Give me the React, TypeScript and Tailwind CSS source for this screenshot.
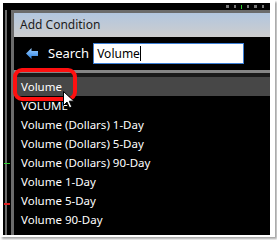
import React from "react";

const items = [
  "VOLUME",
  "Volume (Dollars) 1-Day",
  "Volume (Dollars) 5-Day",
  "Volume (Dollars) 90-Day",
  "Volume 1-Day",
  "Volume 5-Day",
  "Volume 90-Day",
];

const BackArrow = () => (
  <svg width="12" height="11" viewBox="0 0 12 11">
    <defs>
      <linearGradient id="ba" x1="0" y1="0" x2="0" y2="1">
        <stop offset="0" stopColor="#9fd0ff" />
        <stop offset="1" stopColor="#2a7fe0" />
      </linearGradient>
    </defs>
    <path d="M0 5.5 L5.5 0 L5.5 3 L12 3 L12 8 L5.5 8 L5.5 11 Z" fill="url(#ba)" />
  </svg>
);

const Pointer = () => (
  <svg width="13" height="18" viewBox="0 0 13 18">
    <path
      d="M0.5 0.5 L0.5 14.5 L4 11 L6.5 16.8 L8.8 15.8 L6.3 10.2 L11 10.2 Z"
      fill="#fff"
      stroke="#000"
      strokeWidth="1"
      strokeLinejoin="round"
    />
  </svg>
);

const App = () => {
  return (
    <div className="w-[277px] h-[240px] bg-white overflow-hidden font-['Noto_Sans','Liberation_Sans',sans-serif]">
      <div className="w-[275px] h-[237px] bg-white pl-[3px] pt-[3px] shadow-[2px_2px_2px_rgba(0,0,0,0.35)]">
        <div className="relative w-[267px] h-[232px] bg-black flex flex-col overflow-hidden">
          {/* chart behind the dialog, top band */}
          <div className="h-[7px] flex items-center justify-end gap-[5px] pr-[6px]">
            <span className="w-[3px] h-[3px] bg-[#777]" />
            <span className="w-[2px] h-[3px] bg-[#777]" />
            <span className="w-[1px] h-[4px] bg-[#2fd12f]" />
            <span className="w-[2px] h-[3px] bg-[#777]" />
            <span className="w-[3px] h-[3px] bg-[#777]" />
            <span className="w-[2px] h-[3px] bg-[#777]" />
          </div>
          <div className="flex flex-1">
            {/* chart behind the dialog, left strip */}
            <div className="w-[8px] relative">
              <div className="absolute left-[2px] top-0 bottom-0 w-[2px] bg-[#6a6a6a]" />
              <div className="absolute left-[1px] top-[153px] w-[6px] h-[1px] bg-[#2fd12f]" />
              <div className="absolute left-[1px] top-[193px] w-[6px] h-[2px] bg-[#e02020]" />
            </div>

            {/* dialog */}
            <div className="flex-1 flex flex-col border-t-[3px] border-l-[3px] border-[#6b6b6b]">
              <div className="h-[24px] bg-gradient-to-b from-[#b2c6df] to-[#cdcdcd] flex items-center pl-[6px] text-[12px] text-[#1c1c1c]">
                Add Condition
              </div>
              <div className="h-[33px] flex items-center pl-[12px]">
                <BackArrow />
                <span className="ml-[10px] text-white text-[13px]">Search</span>
                <div className="ml-[4px] w-[151px] h-[21px] bg-white border border-[#3c7fd6] flex items-center pl-[3px] text-[12px] text-black">
                  Volume
                  <span className="w-[1px] h-[15px] bg-black" />
                </div>
              </div>
              <div className="h-[3px] bg-[#858585]" />
              <div className="h-[4px] bg-[#1a1a1a]" />
              <div className="h-[19px] bg-[#474747] flex items-center pl-[7px] text-white text-[11.5px]">
                Volume
              </div>
              {items.map((t) => (
                <div
                  key={t}
                  className="h-[19px] flex items-center pl-[7px] text-white text-[11.5px]"
                >
                  {t}
                </div>
              ))}
            </div>
          </div>

          {/* annotation */}
          <div className="absolute left-[10px] top-[65px] w-[64px] h-[33px] border-[4px] border-[#ff1010] rounded-[9px]" />
          <div className="absolute left-[60px] top-[88px]">
            <Pointer />
          </div>
        </div>
      </div>
    </div>
  );
};

export default App;
